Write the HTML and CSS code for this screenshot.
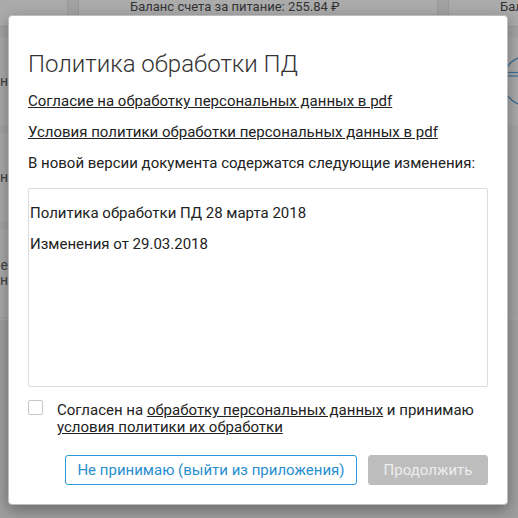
FILE: index.html
```html
<!DOCTYPE html>
<html lang="ru">
<head>
<meta charset="utf-8">
<title>Политика обработки ПД</title>
<link rel="stylesheet" href="styles.css">
</head>
<body>
<div class="page">
  <div class="topbar">
    <div class="tb-cell tb-first"></div>
    <div class="tb-sep"></div>
    <div class="tb-cell tb-balance">Баланс счета за питание: 255.84 ₽</div>
    <div class="tb-sep"></div>
    <div class="tb-cell tb-balance tb-last">Баланс счета за питание: 120.00 ₽</div>
  </div>
  <div class="rows">
    <div class="side side-left">
      <div class="card"><span>н</span></div>
      <div class="card"><span>н</span></div>
      <div class="card"><span>е<br>н</span></div>
    </div>
    <div class="side side-right">
      <div class="card card-icon">
        <svg class="plate" width="11" height="60" viewBox="0 0 11 60">
          <circle cx="21" cy="30" r="25" fill="none" stroke="#3b6e96" stroke-width="1.3"/>
          <line x1="0" y1="21.5" x2="11" y2="21.5" stroke="#3b6e96" stroke-width="1.2"/>
          <line x1="0" y1="25" x2="11" y2="25" stroke="#3b6e96" stroke-width="1.2"/>
        </svg>
      </div>
    </div>
  </div>
</div>

<div class="modal">
  <h4 class="modal-title">Политика обработки ПД</h4>
  <p class="para"><a class="doc-link" href="#">Согласие на обработку персональных данных в pdf</a></p>
  <p class="para"><a class="doc-link" href="#">Условия политики обработки персональных данных в pdf</a></p>
  <p class="para para-last">В новой версии документа содержатся следующие изменения:</p>
  <div class="changes">
    <p class="para">Политика обработки ПД 28 марта 2018</p>
    <p class="para">Изменения от 29.03.2018</p>
  </div>
  <div class="agree">
    <span class="checkbox"></span>
    <span class="agree-text">Согласен на <a class="doc-link" href="#">обработку персональных данных</a> и принимаю <a class="doc-link" href="#">условия политики их обработки</a></span>
  </div>
  <div class="actions">
    <button class="btn btn-outline">Не принимаю (выйти из приложения)</button>
    <button class="btn btn-disabled">Продолжить</button>
  </div>
</div>
</body>
</html>
```
FILE: styles.css
```css
* { box-sizing: border-box; }
html, body { margin: 0; padding: 0; }
body {
  width: 518px;
  height: 518px;
  overflow: hidden;
  background: #9f9f9f;
  font-family: Roboto, "Liberation Sans", sans-serif;
  position: relative;
}

/* background page (dimmed) */
.page { width: 518px; }
.topbar {
  display: flex;
  height: 27px;
  background: #ababab;
  border-bottom: 1px solid #9a9a9a;
}
.tb-cell { height: 26px; }
.tb-first { width: 67px; }
.tb-sep {
  width: 12px;
  background: #a2a2a2;
  border-left: 1px solid #999;
  border-right: 1px solid #999;
}
.tb-balance {
  width: 358px;
  padding-left: 51px;
  font-size: 13px;
  line-height: 14px;
  color: #333;
  white-space: nowrap;
  overflow: hidden;
}
.tb-last { width: 70px; flex: 1; }

.rows {
  display: flex;
  justify-content: space-between;
  padding-top: 10px;
  height: 293px;
  border-bottom: 1px solid #a8a8a8;
  background: #a4a4a4;
}
.side { width: 8px; overflow: hidden; }
.side-right { width: 11px; }
.card {
  height: 88px;
  margin-bottom: 8px;
  background: #aaaaaa;
  display: flex;
  align-items: center;
  justify-content: flex-end;
  font-size: 14px;
  line-height: 15px;
  color: #444;
  white-space: nowrap;
}
.card span { display: block; text-align: right; }
.card-icon { justify-content: flex-start; }
.plate { display: block; }

/* modal */
.modal {
  position: absolute;
  left: 8px;
  top: 15px;
  width: 500px;
  background: #fff;
  border: 1px solid #bdbdbd;
  border-radius: 4px;
  box-shadow: 0 5px 15px rgba(0, 0, 0, 0.35);
  padding: 34px 19px 19px;
  color: #222;
}
.modal-title {
  margin: 0 0 13px;
  font-size: 24px;
  line-height: 28px;
  font-weight: 300;
  color: #333;
}
.para {
  margin: 0 0 10px;
  font-size: 15px;
  line-height: 21px;
}
.para-last { margin-bottom: 14px; }
.doc-link { color: #222; text-decoration: underline; }

.changes {
  height: 199px;
  border: 1px solid #dcdcdc;
  border-radius: 2px;
  padding: 14px 10px 0 1px;
}

.agree {
  display: flex;
  align-items: flex-start;
  gap: 14px;
  margin-top: 13px;
}
.checkbox {
  flex: none;
  width: 15px;
  height: 15px;
  border: 1px solid #c6c6c6;
  border-radius: 2px;
  background: #fff;
}
.agree-text {
  padding-top: 2px;
  font-size: 15px;
  line-height: 17px;
  color: #222;
}

.actions {
  display: flex;
  justify-content: flex-end;
  gap: 11px;
  margin-top: 19px;
}
.btn {
  height: 30px;
  border-radius: 3px;
  font-family: Roboto, "Liberation Sans", sans-serif;
  font-size: 15px;
  padding: 0;
}
.btn-outline {
  width: 292px;
  background: #fff;
  border: 1px solid #2a9ad6;
  color: #2a8fcf;
}
.btn-disabled {
  width: 120px;
  background: #bdbdbd;
  border: 1px solid #bdbdbd;
  color: #ededed;
}
```
